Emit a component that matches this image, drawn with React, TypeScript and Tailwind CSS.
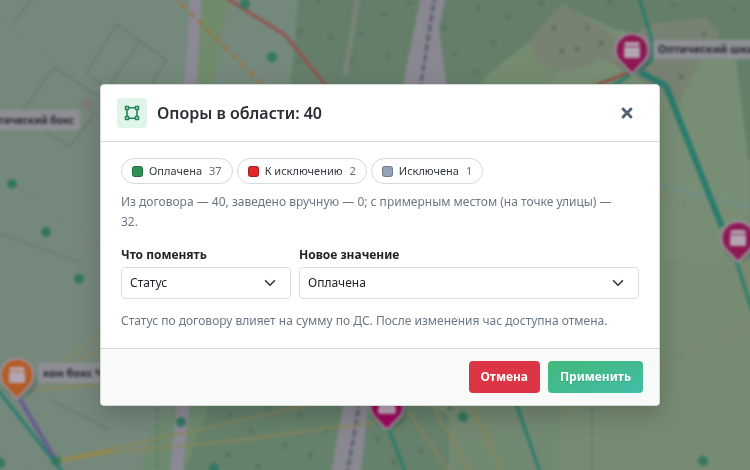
import { FaTimes } from "react-icons/fa";

const font = "font-['Segoe_UI','Noto_Sans',sans-serif]";

const poles = [
  [12, 184], [46, 232], [79, 279], [0, 463], [56, 461], [272, 57], [245, 4],
  [181, 422], [214, 468], [463, 417], [703, 461],
];

const trees = [
  [300, 32], [318, 1], [331, 38], [361, 34], [384, 14], [388, 56], [352, 61],
  [299, 61], [410, 3], [444, 28], [455, 54], [478, 8], [493, 42], [477, 72],
  [508, 17], [541, 3], [610, 2], [674, 5], [734, 9], [554, 28], [587, 28],
  [562, 51], [577, 49], [601, 43], [681, 77], [704, 34], [230, 415], [251, 431],
  [285, 445], [228, 455], [299, 415], [326, 430], [310, 455], [268, 408],
  [258, 466], [378, 439], [394, 462], [421, 451], [450, 408],
];

function Pin({ x, y, color }: { x: number; y: number; color: string }) {
  return (
    <g transform={`translate(${x} ${y})`}>
      <ellipse cx="2" cy="5" rx="18" ry="18" fill="#3f4f48" opacity="0.350" />
      <path
        d="M0 24 L-11.500 12 A16.500 16.500 0 1 1 11.500 12 Z"
        fill={color}
        stroke="#a295a2"
        strokeWidth="2"
        strokeLinejoin="round"
      />
      <g fill="#b3a6b3">
        <path d="M-7 -8h14l1 4h-16z" />
        <rect x="-8" y="-3" width="16" height="11" rx="1" />
      </g>
    </g>
  );
}

function MapView() {
  return (
    <svg
      aria-hidden="true"
      viewBox="0 0 750 470"
      preserveAspectRatio="xMidYMid slice"
      className={`absolute inset-0 h-full w-full ${font}`}
      fill="none"
    >
      <defs>
        <filter id="soften" x="0" y="0" width="1" height="1" colorInterpolationFilters="sRGB">
          <feGaussianBlur stdDeviation="1.400" />
        </filter>
      </defs>
      <g filter="url(#soften)">
        <rect x="-10" y="-10" width="770" height="490" fill="#75887c" />
        <path d="M430 -10H760V480H440L430 200Z" fill="#768b72" />
        <path d="M299 -10H563L561 5L530 41L500 65L470 100H289Z" fill="#657e69" />
        <path d="M561 -10H760V160H748L736 62L640 40L561 5Z" fill="#657e69" />
        <path d="M500 66L530 41L620 30L736 60L748 160V260H500Z" fill="#788e74" />
        <path d="M480 84Q490 70 506 64L530 41L562 70L540 90Z" fill="#748b70" />
        <path d="M562 4L532 37Q528 60 550 70Q575 74 600 60L625 70L680 103L704 54L720 35L705 17L653 24L622 40Z" fill="#788272" />
        <path d="M203 -10H229L214 90H195Z" fill="#718a6b" />
        <path d="M188 400H245L205 480H140L150 430Z" fill="#6f896e" />
        <path d="M210 400H410L450 415L448 480H182Z" fill="#65806b" />
        <path d="M448 418L470 400H560V480H452Z" fill="#728971" />
        <path d="M191 -10H202L196 90H184Z M177 400H190L182 480H169Z" fill="#8b8995" />
        <path d="M422 -10H447L439 30L447 90H402Z M344 400H369L360 480H330Z" fill="#898891" />
        <path d="M358 -5L354 20L345 76" stroke="#7c857f" strokeWidth="4" />
        <path d="M435 -5L420 90M360 400L346 480" stroke="#595a72" strokeWidth="3" strokeDasharray="7 3" />
        <g stroke="#65796d" strokeWidth="1.600">
          <path d="M35 -5L14 22M117 24L86 73L110 90M117 24L166 60L152 84M140 42L110 84M54 67L20 115M54 67L100 98M45 133L70 146L96 112M0 233L80 263M50 400L110 430" />
        </g>
        <g stroke="#817d71" strokeWidth="2" strokeDasharray="3 4">
          <path d="M0 18L24 36L58 64L102 89M0 172L24 191L62 220L102 247M0 450L35 472M470 436L560 408M655 370L700 346L755 323M655 196L755 219" />
        </g>
        <g fill="#587060" opacity="0.700">
          {trees.map(([x, y]) => (
            <circle key={`${x}-${y}`} cx={x} cy={y} r="3" />
          ))}
        </g>
        <path d="M655 184L755 208" stroke="#6f8b92" strokeWidth="2" />
        <path d="M157 400V475M592 400V475" stroke="#4f7d72" strokeWidth="2" strokeDasharray="5 3" />
        <path d="M172 -5L262 84" stroke="#957443" strokeWidth="3" strokeDasharray="7 5" />
        <g stroke="#89855a" strokeWidth="2">
          <path d="M56 461L110 449L185 433L320 402M56 461L110 453L240 440L380 422M55 366L105 332M75 364L105 347M35 390L105 384" />
          <path d="M407 410L452 475M432 405L472 475M470 403L504 475" />
          <path d="M742 260L755 292" strokeDasharray="4 3" />
        </g>
        <path d="M56 461L112 451" stroke="#98894b" strokeWidth="3" />
        <path d="M222 -5L250 13L285 35L328 88M632 71L595 86" stroke="#91514c" strokeWidth="3" />
        <g stroke="#287b6d" strokeWidth="3">
          <path d="M-2 390L64 474M388 426L406 475M516 403L541 475M638 -5L652 40V60L610 88M736 260L755 320" />
          <path d="M640 72L666 86L722 227" strokeWidth="6" strokeLinejoin="round" />
        </g>
        <path d="M18 396L56 461" stroke="#665a8f" strokeWidth="4" />
        <g fill="#347760">
          {poles.map(([x, y]) => (
            <circle key={`${x}-${y}`} cx={x} cy={y} r="5" />
          ))}
        </g>
        <g fill="#8d8f95">
          <rect x="-6" y="110" width="86" height="20" rx="2" />
          <rect x="653" y="40" width="110" height="19" rx="2" />
          <rect x="38" y="363" width="80" height="20" rx="2" />
        </g>
        <ellipse cx="87" cy="104" rx="7" ry="6" fill="#7d7c77" />
        <g fill="#24282e" fontSize="11" fontWeight="700">
          <text x="74" y="124" textAnchor="end" fontSize="10">тический бокс</text>
          <text x="658" y="53">Оптический шкаф</text>
          <text x="43" y="377">кон бокс Ч</text>
        </g>
      </g>
      <g filter="url(#soften)">
        <Pin x={632} y={50} color="#8c1752" />
        <Pin x={738} y={238} color="#8c1752" />
        <Pin x={17} y={375} color="#b35b24" />
        <Pin x={387} y={406} color="#9b075a" />
        <path d="M378 408h5v5h-5zM391 408h5v5h-5z" fill="#d0a4c0" />
      </g>
    </svg>
  );
}

function AreaIcon() {
  return (
    <svg width="16" height="16" viewBox="0 0 16 16" fill="none" stroke="#218456" strokeWidth="1.600" aria-hidden="true">
      <path d="M4.500 2.700h7M4.500 13.300h7M3 4.500v7M13 4.500v7" />
      <path d="M1.500 1.500h3v3h-3zM11.500 1.500h3v3h-3zM1.500 11.500h3v3h-3zM11.500 11.500h3v3h-3z" strokeWidth="1.500" strokeLinejoin="round" />
    </svg>
  );
}

function StatusPill({ swatch, label, count }: { swatch: string; label: string; count: number }) {
  return (
    <li className="flex h-[26px] items-center rounded-full border border-[#d3d9df] px-2.5 text-[11px] text-[#343a40]">
      <span className={`mr-1.5 size-[11px] rounded-[3px] border border-black/25 ${swatch}`} />
      {label}
      <span className="ml-[7px] text-[#626b74]">{count}</span>
    </li>
  );
}

function SelectField({ id, label, options }: { id: string; label: string; options: string[] }) {
  return (
    <div className="min-w-0">
      <label htmlFor={id} className="block pb-px text-xs leading-[22px] font-bold text-[#212529]">
        {label}
      </label>
      <div className="relative">
        <select
          id={id}
          className="block h-8 w-full appearance-none rounded border border-[#dbdfe3] bg-white pr-8 pl-2 text-xs text-[#212529]"
        >
          {options.map((option) => (
            <option key={option}>{option}</option>
          ))}
        </select>
        <svg
          className="pointer-events-none absolute top-2.5 right-[15px]"
          width="12"
          height="12"
          viewBox="0 0 16 16"
          fill="none"
          stroke="#343a40"
          strokeWidth="2.200"
          strokeLinecap="round"
          strokeLinejoin="round"
          aria-hidden="true"
        >
          <path d="m2 5 6 6 6-6" />
        </svg>
      </div>
    </div>
  );
}

export default function App() {
  return (
    <div className={`relative flex min-h-screen items-center justify-center overflow-hidden bg-[#75887c] pt-5 pl-2.5 ${font}`}>
      <MapView />
      <section
        role="dialog"
        aria-modal="true"
        aria-labelledby="dialog-title"
        className="relative w-full max-w-[560px] overflow-hidden rounded border border-[#d2d9d5] bg-white shadow-[0_8px_24px_rgba(0,0,0,0.2)]"
      >
        <header className="flex h-[57px] items-center border-b border-[#d5d9d9] px-4">
          <span className="flex size-[30px] items-center justify-center rounded bg-[#e0f4e9]">
            <AreaIcon />
          </span>
          <h1 id="dialog-title" className="ml-2.5 text-base font-semibold text-[#2b2f33]">
            Опоры в области: 40
          </h1>
          <button type="button" aria-label="Закрыть" className="ml-auto flex size-8 items-center justify-center text-[#536171]">
            <FaTimes size={16} />
          </button>
        </header>

        <div className="px-5 pt-4 pb-[17px]">
          <ul className="flex flex-wrap gap-1">
            <StatusPill swatch="bg-[#2f9158]" label="Оплачена" count={37} />
            <StatusPill swatch="bg-[#df2727]" label="К исключению" count={2} />
            <StatusPill swatch="bg-[#94a3b8]" label="Исключена" count={1} />
          </ul>
          <p className="mt-2 pr-3 text-xs leading-5 text-[#6b7785]">
            Из договора — 40, заведено вручную — 0; с примерным местом (на точке улицы) — 32.
          </p>
          <div className="mt-3 grid grid-cols-[1fr_2fr] gap-2">
            <SelectField id="field" label="Что поменять" options={["Статус"]} />
            <SelectField id="value" label="Новое значение" options={["Оплачена", "К исключению", "Исключена"]} />
          </div>
          <p className="mt-3 text-xs leading-5 text-[#6b7785]">
            Статус по договору влияет на сумму по ДС. После изменения час доступна отмена.
          </p>
        </div>

        <footer className="flex justify-end gap-2 border-t border-[#d5d9d9] bg-[#f8f9f9] px-4 py-3">
          <button type="button" className="h-8 rounded bg-[#dc3545] px-3 text-xs font-bold text-white">
            Отмена
          </button>
          <button
            type="button"
            className="h-8 rounded bg-linear-to-br from-[#43b878] to-[#42bda8] px-3 text-xs font-bold text-white text-shadow-2xs"
          >
            Применить
          </button>
        </footer>
      </section>
    </div>
  );
}
